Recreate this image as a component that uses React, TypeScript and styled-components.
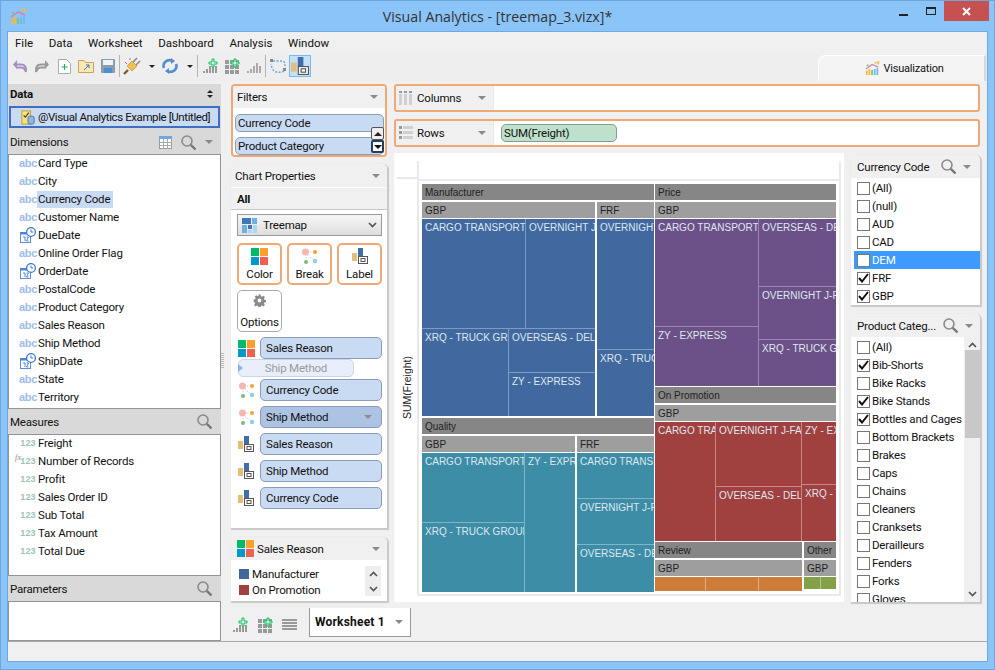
import * as React from 'react';
import styled, { createGlobalStyle } from 'styled-components';

const GlobalStyle = createGlobalStyle`
  html, body { margin: 0; padding: 0; overflow: hidden; }
  body { font-family: Roboto, "Noto Sans", sans-serif; font-size: 11.5px; letter-spacing: -0.2px; color: #111; }
  * { box-sizing: border-box; }
`;

const orange = '#f0a874';
const chartFont = '"Liberation Sans", Arial, sans-serif';

const Window = styled.div`
  width: 995px;
  height: 670px;
  background: #8bc4f8;
  border: 1px solid #6fa5d8;
  padding: 0 6px 7px;
  display: flex;
  flex-direction: column;
`;
const TitleBar = styled.div`
  height: 30px;
  display: grid;
  grid-template-columns: 1fr auto 1fr;
  align-items: center;
`;
const AppLogo = styled.div`
  padding: 1px 0 0 3px;
  display: flex;
`;
const Title = styled.div`
  font-family: "Open Sans", sans-serif;
  font-size: 14.2px;
  letter-spacing: 0;
  color: #333;
`;
const WindowButtons = styled.div`
  justify-self: end;
  align-self: start;
  display: flex;
  margin-right: -1px;
`;
const WindowButton = styled.div<{ $close?: boolean }>`
  width: ${p => (p.$close ? 45 : 27)}px;
  height: 20px;
  background: ${p => (p.$close ? '#c75050' : 'transparent')};
  display: flex;
  align-items: center;
  justify-content: center;
`;
const Content = styled.div`
  flex: 1;
  background: #f0f0f0;
  border: 1px solid #6fa8e0;
  display: flex;
  flex-direction: column;
`;
const MenuBar = styled.div`
  height: 22px;
  display: flex;
  align-items: center;
  gap: 15.6px;
  padding-left: 7px;
  flex: none;
`;
const MenuItem = styled.span`
  font-size: 11.5px;
  letter-spacing: 0;
`;
const Toolbar = styled.div`
  height: 27px;
  flex: none;
  display: flex;
  align-items: flex-start;
  background: #eeeeee;
  padding-left: 1px;
  margin-bottom: 3px;
`;
const ToolButton = styled.div<{ $w?: number; $active?: boolean }>`
  width: ${p => p.$w ?? 22}px;
  height: 22px;
  margin-top: 1px;
  display: flex;
  align-items: center;
  justify-content: center;
  background: ${p => (p.$active ? '#c5e0f8' : 'transparent')};
  border: ${p => (p.$active ? '1px solid #7ab8f0' : 'none')};
`;
const ToolSep = styled.div`
  width: 1px;
  height: 22px;
  margin: 1px 1px 1px 0;
  background: #b5b5b5;
`;
const VisTab = styled.div`
  margin-left: auto;
  margin-right: 1px;
  margin-top: 1px;
  width: 168px;
  height: 26px;
  background: #f4f4f4;
  border-top: 1px solid #fff;
  border-left: 1px solid #fff;
  border-right: 2px solid #d8d8d8;
  border-top-left-radius: 8px;
  display: flex;
  align-items: center;
  justify-content: center;
  gap: 3px;
  padding-left: 6px;
  font-size: 11px;
`;
const Main = styled.div`
  height: 557px;
  flex: none;
  display: flex;
`;
const LeftPanel = styled.div`
  width: 213px;
  flex: none;
  display: flex;
  flex-direction: column;
  background: #d9d9d9;
`;
const PanelHead = styled.div<{ $h: number; $bold?: boolean }>`
  height: ${p => p.$h}px;
  flex: none;
  display: flex;
  align-items: center;
  gap: 8px;
  padding: 0 8px 0 2px;
  font-weight: ${p => (p.$bold ? 700 : 400)};
`;
const HeadText = styled.span`
  flex: 1;
`;
const SourceRow = styled.div`
  height: 22px;
  margin: 2px 1px 2px;
  flex: none;
  background: #c9daf3;
  border: 2px solid #3f6fc0;
  display: flex;
  align-items: center;
  padding-left: 10px;
  gap: 3px;
  letter-spacing: -0.4px;
  white-space: nowrap;
  overflow: hidden;
`;
const FieldList = styled.div<{ $h: number }>`
  height: ${p => p.$h}px;
  flex: none;
  background: #fff;
  border: 1px solid #949494;
`;
const FieldRow = styled.div`
  height: 18px;
  display: flex;
  align-items: center;
  padding: 0 0 2px 10px;
  white-space: nowrap;
`;
const FieldType = styled.span<{ $kind: string }>`
  position: relative;
  width: 18px;
  flex: none;
  display: flex;
  justify-content: center;
  font-family: ${chartFont};
  font-size: ${p => (p.$kind === 'abc' ? 11 : 9)}px;
  font-weight: 700;
  color: ${p => (p.$kind === 'abc' ? '#9dbde9' : '#9cc5b4')};
  letter-spacing: ${p => (p.$kind === 'abc' ? '-0.3px' : '0.2px')};
`;
const FxMark = styled.i`
  position: absolute;
  left: -4px;
  top: -3px;
  font-size: 8px;
  font-family: "Liberation Serif", serif;
  font-weight: 400;
  color: #888;
`;
const FieldName = styled.span<{ $selected?: boolean }>`
  background: ${p => (p.$selected ? '#c9daf3' : 'transparent')};
  padding: 0 3px 0 1px;
  line-height: 17px;
`;
const Splitter = styled.div`
  width: 10px;
  flex: none;
  display: flex;
  align-items: flex-start;
  padding-top: 269px;
`;
const Grip = styled.div`
  width: 3px;
  height: 15px;
  background: repeating-linear-gradient(#bbb 0 1px, #f0f0f0 1px 2px);
`;
const Workspace = styled.div`
  flex: 1;
  display: flex;
  flex-direction: column;
  min-width: 0;
`;
const Panels = styled.div`
  height: 518px;
  flex: none;
  display: flex;
  gap: 7px;
`;
const CenterCol = styled.div`
  width: 156px;
  flex: none;
  display: flex;
  flex-direction: column;
`;
const FilterCard = styled.div`
  position: relative;
  height: 73px;
  flex: none;
  border: 2px solid ${orange};
  border-radius: 4px;
  background: #fff;
  overflow: hidden;
  margin-bottom: 7px;
`;
const CardHead = styled.div<{ $h?: number }>`
  height: ${p => p.$h ?? 22}px;
  flex: none;
  background: #f0f0f0;
  display: flex;
  align-items: center;
  justify-content: space-between;
  padding: 0 7px 0 4px;
`;
const Pill = styled.div<{ $tone?: 'normal' | 'dark' | 'green'; $h?: number; $w?: number; $pad?: number }>`
  height: ${p => p.$h ?? 22}px;
  width: ${p => (p.$w ? `${p.$w}px` : 'auto')};
  background: ${p => (p.$tone === 'dark' ? '#adc3e3' : p.$tone === 'green' ? '#bfe0cb' : '#c9daf3')};
  border: 1px solid ${p => (p.$tone === 'green' ? '#7fa090' : '#8a9cb8')};
  border-radius: 5px;
  display: flex;
  align-items: center;
  justify-content: space-between;
  padding: 0 9px 0 ${p => p.$pad ?? 2}px;
  white-space: nowrap;
`;
const FilterPills = styled.div`
  padding: 6px 1px 0 2px;
  display: flex;
  flex-direction: column;
  gap: 5px;
`;
const ScrollStep = styled.div<{ $bottom?: boolean }>`
  position: absolute;
  right: 1px;
  top: ${p => (p.$bottom ? 54 : 41)}px;
  width: 13px;
  height: 13px;
  background: ${p => (p.$bottom ? '#fff' : '#eee')};
  border: ${p => (p.$bottom ? '2px solid #1f3f66' : '1px solid #555')};
  border-radius: 2px;
  display: flex;
  align-items: center;
  justify-content: center;
`;
const Card = styled.div<{ $h: number; $top?: number }>`
  height: ${p => p.$h}px;
  flex: none;
  margin-top: ${p => p.$top ?? 0}px;
  background: #fff;
  border-radius: 5px 5px 0 0;
  box-shadow: 1px 1px 1px 1px #c8c8c8;
  display: flex;
  flex-direction: column;
  overflow: hidden;
`;
const AllRow = styled.div`
  height: 23px;
  flex: none;
  background: #f0f0f0;
  border-top: 1px solid #fff;
  border-bottom: 1px solid #c8c8c8;
  padding-left: 6px;
  display: flex;
  align-items: center;
  font-weight: 700;
`;
const ChartSelect = styled.div`
  height: 22px;
  flex: none;
  margin: 4px 5px 0 6px;
  border: 1px solid #999;
  background: linear-gradient(#f6f6f6, #dedede);
  display: flex;
  align-items: center;
  gap: 6px;
  padding: 0 4px;
`;
const SelectText = styled.span`
  flex: 1;
`;
const CardButtons = styled.div`
  display: grid;
  grid-template-columns: repeat(3, 45px);
  gap: 5px;
  padding: 7px 5px 0 6px;
`;
const MarkButton = styled.div<{ $plain?: boolean }>`
  height: 42px;
  background: #fff;
  border: ${p => (p.$plain ? '1px solid #aaa' : `2px solid ${orange}`)};
  border-radius: 5px;
  display: flex;
  flex-direction: column;
  align-items: center;
  justify-content: space-between;
  padding: 3px 0 2px;
`;
const Encodings = styled.div`
  padding: 5px 5px 0 7px;
  display: flex;
  flex-direction: column;
`;
const EncodingRow = styled.div`
  display: grid;
  grid-template-columns: 22px 1fr;
  align-items: center;
  margin-bottom: 5px;
`;
const GhostPill = styled.div`
  position: relative;
  height: 18px;
  width: 116px;
  margin: -5px 0 2px;
  background: #e8effa;
  border: 1px solid #c9d6ea;
  border-radius: 5px;
  color: #9a9a9a;
  text-align: center;
  line-height: 16px;
  white-space: nowrap;
`;
const GhostArrow = styled.i`
  position: absolute;
  left: -1px;
  top: 4px;
  border-left: 5px solid #8fb0f0;
  border-top: 4px solid transparent;
  border-bottom: 4px solid transparent;
`;
const LegendHead = styled(CardHead)`
  justify-content: flex-start;
  gap: 3px;
  padding: 0 7px 0 6px;
`;
const LegendBody = styled.div`
  display: flex;
  justify-content: space-between;
  padding: 6px 6px 0 8px;
`;
const LegendRow = styled.div`
  height: 16px;
  display: flex;
  align-items: center;
  gap: 3px;
  white-space: nowrap;
`;
const Swatch = styled.span<{ $c: string }>`
  width: 10px;
  height: 10px;
  background: ${p => p.$c};
`;
const LegendStep = styled.div`
  width: 16px;
  height: 30px;
  background: #eee;
  display: flex;
  flex-direction: column;
  align-items: center;
  justify-content: space-around;
`;
const RightCol = styled.div`
  width: 586px;
  flex: none;
  display: flex;
  flex-direction: column;
`;
const Shelf = styled.div`
  height: 28px;
  flex: none;
  margin-bottom: 7px;
  background: #fff;
  border: 2px solid ${orange};
  border-radius: 3px;
  display: flex;
`;
const ShelfLabel = styled.div`
  width: 98px;
  flex: none;
  background: #f0f0f0;
  border-right: 1px solid #eeeadb;
  display: flex;
  align-items: center;
  padding: 0 7px 0 3px;
  gap: 4px;
`;
const ShelfBody = styled.div`
  flex: 1;
  display: flex;
  align-items: center;
  padding-left: 7px;
`;
const Stage = styled.div`
  flex: 1;
  display: flex;
  gap: 7px;
  margin-top: -1px;
`;
const Chart = styled.div`
  width: 450px;
  height: 449px;
  flex: none;
  background: #fff;
  padding: 8px 3px 6px;
  display: grid;
  grid-template-columns: 20px minmax(0, 1fr);
  grid-template-rows: 18px minmax(0, 1fr);
`;
const Corner = styled.div`
  border-bottom: 2px solid #e9e9e9;
`;
const TopAxis = styled.div`
  border-left: 2px solid #e9e9e9;
  border-right: 2px solid #e9e9e9;
`;
const YAxis = styled.div`
  display: flex;
  align-items: center;
  justify-content: center;
  font-family: ${chartFont};
  font-size: 10.5px;
  letter-spacing: 0;
  color: #222;
`;
const YLabel = styled.span`
  writing-mode: vertical-rl;
  transform: rotate(180deg);
`;
const Plot = styled.div`
  border: 2px solid #e9e9e9;
  padding: 3px 3px 2px;
  display: flex;
  gap: 1px;
  min-width: 0;
`;
const Column = styled.div<{ $w?: number; $gap?: number }>`
  width: ${p => (p.$w ? `${p.$w}px` : 'auto')};
  flex: ${p => (p.$w ? 'none' : '1 1 0')};
  min-width: 0;
  display: flex;
  flex-direction: column;
  gap: ${p => p.$gap ?? 2}px;
`;
const Row = styled.div<{ $h?: number; $gap?: number }>`
  height: ${p => (p.$h ? `${p.$h}px` : 'auto')};
  display: flex;
  gap: ${p => p.$gap ?? 1}px;
  min-width: 0;
`;
const Section = styled.div<{ $h?: number; $w?: number }>`
  height: ${p => (p.$h ? `${p.$h}px` : 'auto')};
  width: ${p => (p.$w ? `${p.$w}px` : 'auto')};
  flex: ${p => (p.$w ? 'none' : 'initial')};
  min-width: 0;
  display: flex;
  flex-direction: column;
  overflow: hidden;
`;
const GroupHead = styled.div<{ $level: 1 | 2 }>`
  height: 16px;
  flex: none;
  margin-bottom: ${p => (p.$level === 1 ? 2 : 1)}px;
  background: ${p => (p.$level === 1 ? '#868686' : '#9e9e9e')};
  color: #222;
  font-family: ${chartFont};
  font-size: 10px;
  letter-spacing: 0;
  line-height: 17px;
  padding-left: 3px;
  white-space: nowrap;
  overflow: hidden;
`;
const Sections = styled.div`
  flex: 1;
  display: flex;
  gap: 2px;
  min-height: 0;
  min-width: 0;
`;
const Group = styled.div<{ $w?: number }>`
  width: ${p => (p.$w ? `${p.$w}px` : 'auto')};
  flex: ${p => (p.$w ? 'none' : '1 1 0')};
  display: flex;
  flex-direction: column;
  min-width: 0;
`;
const TileSplit = styled.div<{ $dir: 'row' | 'column'; $size?: number; $line: string }>`
  display: flex;
  flex-direction: ${p => p.$dir};
  gap: 1px;
  background: ${p => p.$line};
  flex: ${p => (p.$size ? `0 0 ${p.$size}px` : '1 1 0')};
  min-width: 0;
  min-height: 0;
`;
const Tile = styled.div<{ $size?: number; $fill: string }>`
  flex: ${p => (p.$size ? `0 0 ${p.$size}px` : '1 1 0')};
  min-width: 0;
  min-height: 0;
  background: ${p => p.$fill};
  color: #dfe7ef;
  font-family: ${chartFont};
  font-size: 10px;
  letter-spacing: 0;
  padding: 3px 0 0 3px;
  white-space: nowrap;
  overflow: hidden;
`;
const FilterCol = styled.div`
  width: 129px;
  flex: none;
  display: flex;
  flex-direction: column;
  padding-top: 2px;
`;
const FilterBox = styled.div<{ $h: number }>`
  height: ${p => p.$h}px;
  flex: none;
  background: #fff;
  border-radius: 5px 5px 0 0;
  box-shadow: 1px 1px 1px 1px #c8c8c8;
  margin-bottom: 9px;
  display: flex;
  flex-direction: column;
  overflow: hidden;
`;
const FilterHead = styled.div`
  height: 23px;
  flex: none;
  background: #f0f0f0;
  display: flex;
  align-items: center;
  gap: 6px;
  padding: 0 9px 0 6px;
  white-space: nowrap;
`;
const FilterBody = styled.div`
  flex: 1;
  display: flex;
  min-height: 0;
`;
const FilterList = styled.div`
  flex: 1;
  padding: 1px 0 0 3px;
  min-width: 0;
  overflow: hidden;
`;
const FilterItem = styled.div<{ $selected?: boolean }>`
  height: 18px;
  display: flex;
  align-items: center;
  gap: 2px;
  padding-left: 3px;
  white-space: nowrap;
  background: ${p => (p.$selected ? '#3d9bff' : 'transparent')};
  color: ${p => (p.$selected ? '#fff' : '#111')};
`;
const CheckBox = styled.span`
  width: 13px;
  height: 13px;
  flex: none;
  background: #fff;
  border: 1px solid #777;
  display: flex;
  align-items: center;
  justify-content: center;
`;
const ScrollBar = styled.div`
  width: 16px;
  flex: none;
  background: #f0f0f0;
  display: flex;
  flex-direction: column;
  align-items: center;
  padding-top: 5px;
`;
const Thumb = styled.div`
  width: 15px;
  height: 88px;
  margin-top: 2px;
  background: #c8c8c8;
`;
const ScrollEnd = styled.div`
  margin-top: auto;
  padding-bottom: 5px;
  display: flex;
`;
const TabBar = styled.div`
  flex: 1;
  display: flex;
  align-items: flex-start;
  padding-top: 6px;
`;
const TabIcons = styled.div`
  display: flex;
  gap: 9px;
  padding: 9px 12px 0 1px;
`;
const SheetTab = styled.div`
  width: 102px;
  height: 29px;
  background: #fff;
  border: 1px solid #999;
  border-top: none;
  display: flex;
  align-items: center;
  justify-content: space-between;
  padding: 0 7px 0 5px;
  font-weight: 700;
  font-size: 12px;
  letter-spacing: 0.2px;
`;
const StatusBar = styled.div`
  flex: 1;
  border-top: 1px solid #aaa;
`;
const Caret = styled.i<{ $c?: string }>`
  flex: none;
  display: block;
  width: 0;
  height: 0;
  border-left: 4px solid transparent;
  border-right: 4px solid transparent;
  border-top: 4px solid ${p => p.$c ?? '#8a8a8a'};
`;
const SmallCaret = styled(Caret)`
  border-left-width: 3px;
  border-right-width: 3px;
  border-top-width: 3px;
  margin-left: 2px;
`;
const CaretUp = styled.i`
  display: block;
  width: 0;
  height: 0;
  border-left: 4px solid transparent;
  border-right: 4px solid transparent;
  border-bottom: 4px solid #222;
`;
const SortArrows = styled.span`
  display: flex;
  flex-direction: column;
  gap: 2px;
`;
const TinyUp = styled.i`
  display: block;
  border-left: 3px solid transparent;
  border-right: 3px solid transparent;
  border-bottom: 3px solid #222;
`;
const TinyDown = styled.i`
  display: block;
  border-left: 3px solid transparent;
  border-right: 3px solid transparent;
  border-top: 3px solid #222;
`;

const Logo = ({ s = 17 }: { s?: number }) => (
  <svg width={s} height={s} viewBox="0 0 17 17">
    <rect x="1" y="11" width="2" height="5" fill="#f5b942" />
    <rect x="4" y="9" width="2" height="7" fill="#f5b942" />
    <rect x="7" y="10" width="2" height="6" fill="#8cc06a" />
    <rect x="10" y="9" width="2" height="7" fill="#6cbcf0" />
    <rect x="13" y="8" width="2" height="8" fill="#6cbcf0" />
    <path d="M1 9 L8 4 L15 7" stroke="#d080b8" strokeWidth="1.4" fill="none" />
    <rect x="2" y="4" width="2" height="2" fill="#8cc06a" />
    <rect x="11" y="1" width="2" height="2" fill="#f5b942" />
    <rect x="14" y="0" width="2" height="4" fill="#f5b942" />
  </svg>
);
const Magnifier = ({ s = 17 }: { s?: number }) => (
  <svg width={s} height={s} viewBox="0 0 17 17" style={{ flex: 'none' }}>
    <circle cx="7" cy="7" r="5" fill="none" stroke="#8a8a8a" strokeWidth="1.6" />
    <path d="M10.8 10.8 L15.5 15.5" stroke="#777" strokeWidth="2.4" />
  </svg>
);
const ColorIcon = () => (
  <svg width="17" height="17" viewBox="0 0 17 17" style={{ flex: 'none' }}>
    <rect x="0" y="0" width="8" height="8" fill="#00b96b" />
    <rect x="9" y="0" width="8" height="8" fill="#f8a030" />
    <rect x="0" y="9" width="8" height="8" fill="#0099cc" />
    <rect x="9" y="9" width="8" height="8" fill="#f06050" />
  </svg>
);
const BreakIcon = () => (
  <svg width="17" height="17" viewBox="0 0 17 17" style={{ flex: 'none' }}>
    <path d="M6 6 L9 9 M9 4 L11 4 M5 9 L5 11 M9 9 L12 11" stroke="#bbb" strokeWidth="0.8" strokeDasharray="1 1" />
    <circle cx="4.5" cy="4" r="3.5" fill="#f5b8b0" />
    <circle cx="14" cy="4" r="2" fill="#f8a030" />
    <circle cx="5" cy="14" r="2" fill="#7cb87c" />
    <circle cx="14" cy="13" r="2.2" fill="#8ccdf5" />
  </svg>
);
const LabelIcon = ({ s = 16 }: { s?: number }) => (
  <svg width={s} height={s} viewBox="0 0 16 16" style={{ flex: 'none' }}>
    <rect x="0" y="5" width="5" height="8" fill="#e5bd7a" />
    <rect x="6" y="0" width="5" height="9" fill="#3f6fa8" />
    <rect x="6.5" y="8.5" width="9" height="7" fill="#fff" stroke="#555" />
    <rect x="9" y="10.5" width="4" height="3" fill="none" stroke="#555" />
  </svg>
);
const DateIcon = () => (
  <svg width="16" height="16" viewBox="0 0 16 16" style={{ flex: 'none' }}>
    <rect x="0.5" y="5.5" width="10" height="10" fill="#fff" stroke="#5b8fd8" />
    <rect x="0" y="5" width="11" height="2.5" fill="#4f86d8" />
    <path d="M3 10 h2 v4 M6.5 10 h2 l-2 4 h2" stroke="#4f86d8" fill="none" />
    <circle cx="11" cy="5" r="4.4" fill="#fff" stroke="#3d7ad0" strokeWidth="1.3" />
    <path d="M11 2.5 V5 H13.2" stroke="#3d7ad0" fill="none" />
  </svg>
);
const TableIcon = () => (
  <svg width="13" height="13" viewBox="0 0 13 13" style={{ flex: 'none' }}>
    <rect x="0.5" y="0.5" width="12" height="12" fill="#fff" stroke="#999" />
    <rect x="0" y="0" width="13" height="3" fill="#6fa8dc" />
    <path d="M4.5 3 V13 M8.5 3 V13 M0 6.5 H13 M0 9.5 H13" stroke="#aaa" />
  </svg>
);
const Chevron = ({ up, c = '#555' }: { up?: boolean; c?: string }) => (
  <svg width="9" height="6" viewBox="0 0 9 6">
    <path d={up ? 'M1 5 L4.5 1.5 L8 5' : 'M1 1 L4.5 4.5 L8 1'} stroke={c} strokeWidth="1.7" fill="none" />
  </svg>
);
const GearIcon = () => (
  <svg width="13" height="13" viewBox="0 0 24 24">
    <path
      fill="#8a8a8a"
      d="M10 1h4l.6 3.1 2 .8 2.6-1.800 2.800 2.800-1.800 2.600.8 2 3 .5v4l-3 .6-.8 2 1.800 2.600-2.800 2.800-2.600-1.800-2 .8-.6 3h-4l-.6-3-2-.8-2.600 1.800-2.800-2.800 1.800-2.600-.8-2L1 14v-4l3.100-.5.8-2-1.800-2.600 2.800-2.800 2.600 1.800 2-.8zM12 8.500a3.500 3.500 0 1 0 0 7 3.500 3.500 0 0 0 0-7z"
    />
  </svg>
);
const TreemapIcon = () => (
  <svg width="15" height="15" viewBox="0 0 15 15" style={{ flex: 'none' }}>
    <rect x="0" y="0" width="9" height="6" fill="#3f78b8" />
    <rect x="10" y="0" width="5" height="6" fill="#6fb0e0" />
    <rect x="0" y="7" width="5" height="8" fill="#6fb0e0" />
    <rect x="6" y="7" width="4" height="4" fill="#3f78b8" />
    <rect x="6" y="12" width="4" height="3" fill="#a8d8f5" />
    <rect x="11" y="7" width="4" height="8" fill="#a8d8f5" />
  </svg>
);
const Plus = ({ x, y }: { x: number; y: number }) => (
  <path d={`M${x - 1} ${y - 4} h2 v3 h3 v2 h-3 v3 h-2 v-3 h-3 v-2 h3 z`} fill="#d8f5e0" stroke="#12c060" strokeWidth="1" />
);
const BarsAdd = ({ plus = true, tone = '#999' }: { plus?: boolean; tone?: string }) => (
  <svg width="16" height="16" viewBox="0 0 16 16">
    <rect x="1" y="13" width="2" height="2" fill={tone} />
    <rect x="4" y="11" width="2" height="4" fill={tone} />
    <rect x="7" y="8" width="2" height="7" fill={tone} />
    <rect x="10" y="5" width="2" height="10" fill={tone} />
    <rect x="13" y="8" width="2" height="7" fill={tone} />
    {plus && <Plus x={11} y={5} />}
  </svg>
);
const GridAdd = () => (
  <svg width="16" height="16" viewBox="0 0 16 16">
    {[1, 6, 11].map(x => [2, 7, 12].map(y => <rect key={`${x}${y}`} x={x} y={y} width="4" height="4" fill="#999" />))}
    <Plus x={11} y={5} />
  </svg>
);
const Undo = ({ c, flip }: { c: string; flip?: boolean }) => (
  <svg width="16" height="15" viewBox="0 0 16 15" style={flip ? { transform: 'scaleX(-1)' } : undefined}>
    <path d="M5 1 L1 5.500 L5 10 Z" fill={c} />
    <path d="M3 5.500 H9 C13 5.500 14.500 8 14 13 C13 10 11.500 8.500 9 8.500 H4" stroke={c} strokeWidth="2" fill="none" />
  </svg>
);
const NewDoc = () => (
  <svg width="13" height="15" viewBox="0 0 13 15">
    <path d="M.5.5 H8.500 L12.500 4.500 V14.500 H.5 Z" fill="#fff" stroke="#aaa" />
    <path d="M6.500 5 V11 M3.500 8 H9.500" stroke="#2faa5f" strokeWidth="1.2" />
  </svg>
);
const Folder = () => (
  <svg width="16" height="14" viewBox="0 0 16 14">
    <path d="M.5 1.500 H6 L7.500 3.500 H15.500 V13.500 H.5 Z" fill="#f8e7b5" stroke="#c9a45a" />
    <path d="M6 11 L11 6 M8 6 H11 V9" stroke="#3f78b8" fill="none" />
  </svg>
);
const Save = () => (
  <svg width="14" height="14" viewBox="0 0 14 14">
    <rect x="0" y="0" width="14" height="14" rx="1" fill="#8a9cad" />
    <rect x="2" y="1" width="10" height="5" fill="#eef4fa" />
    <rect x="3" y="9" width="8" height="5" fill="#4a90d0" />
  </svg>
);
const Plug = () => (
  <svg width="18" height="18" viewBox="0 0 18 18">
    <path d="M4 9 L9 4 L14 9 L9 14 Z" fill="#f0c050" stroke="#b08a30" strokeWidth="0.6" />
    <path d="M10 5 L14 1 M13 8 L17 4" stroke="#8a8a8a" strokeWidth="1.6" />
    <path d="M5 13 L1 17" stroke="#7a5a30" strokeWidth="2.4" />
    <path d="M2 5 L4 7 M7 1 L7 3" stroke="#d05a9a" strokeWidth="1" />
  </svg>
);
const Refresh = () => (
  <svg width="16" height="16" viewBox="0 0 16 16">
    <path d="M2 10 C0 5 5 1 10 2.500" stroke="#4f8fd0" strokeWidth="2.600" fill="none" />
    <path d="M14 6 C16 11 11 15 6 13.500" stroke="#4f8fd0" strokeWidth="2.600" fill="none" />
    <path d="M9 0 L13 3 L9 6 Z M7 10 L3 13 L7 16 Z" fill="#4f8fd0" />
  </svg>
);
const Rotate = () => (
  <svg width="16" height="16" viewBox="0 0 16 16">
    <path d="M3 3 H12 C15 3 15 6 15 10 M14 13 C10 15 4 15 2 10 L1 6" stroke="#6aa8d8" strokeDasharray="2 1.500" strokeWidth="1.400" fill="none" />
    <rect x="0" y="1" width="3" height="3" fill="#888" />
    <rect x="13" y="10" width="3" height="3" fill="#888" />
  </svg>
);
const SourceIcon = () => (
  <svg width="14" height="15" viewBox="0 0 16 17" style={{ flex: 'none' }}>
    <rect x="1" y="1" width="10" height="15" fill="#f8e27a" stroke="#b89a30" />
    <path d="M3 6 L5 8 L9 3" stroke="#3a3a3a" strokeWidth="1.300" fill="none" />
    <rect x="8" y="7" width="7" height="9" rx="2" fill="#8fb8e0" stroke="#4a6fa0" />
  </svg>
);
const ShelfDots = ({ rows }: { rows?: boolean }) => (
  <svg width="14" height="14" viewBox="0 0 14 14" style={{ flex: 'none' }}>
    {rows
      ? [0, 5, 10].map(y => (
          <g key={y}>
            <rect x="0" y={y} width="3" height="3" fill="#999" />
            <rect x="4" y={y} width="10" height="3" fill="#d0d0d0" />
          </g>
        ))
      : [0, 5, 10].map(x => (
          <g key={x}>
            <rect x={x} y="0" width="3" height="2" fill="#999" />
            <rect x={x} y="3" width="3" height="11" fill="#d0d0d0" />
          </g>
        ))}
  </svg>
);
const ListLines = () => (
  <svg width="15" height="11" viewBox="0 0 15 11" style={{ marginTop: 2 }}>
    {[0, 3, 6, 9].map(y => <rect key={y} x="0" y={y} width="15" height="2" fill="#999" />)}
  </svg>
);
const Check = () => (
  <svg width="11" height="10" viewBox="0 0 11 10">
    <path d="M1 5 L4 8.500 L10 1" stroke="#111" strokeWidth="2" fill="none" />
  </svg>
);

type Kind = 'abc' | 'date' | 'num' | 'fx';
const dimensions: [string, Kind][] = [
  ['Card Type', 'abc'], ['City', 'abc'], ['Currency Code', 'abc'], ['Customer Name', 'abc'],
  ['DueDate', 'date'], ['Online Order Flag', 'abc'], ['OrderDate', 'date'], ['PostalCode', 'abc'],
  ['Product Category', 'abc'], ['Sales Reason', 'abc'], ['Ship Method', 'abc'], ['ShipDate', 'date'],
  ['State', 'abc'], ['Territory', 'abc'],
];
const measures: [string, Kind][] = [
  ['Freight', 'num'], ['Number of Records', 'fx'], ['Profit', 'num'], ['Sales Order ID', 'num'],
  ['Sub Total', 'num'], ['Tax Amount', 'num'], ['Total Due', 'num'],
];

const Field = ({ name, kind }: { name: string; kind: Kind }) => (
  <FieldRow>
    {kind === 'date' ? (
      <FieldType $kind="abc"><DateIcon /></FieldType>
    ) : (
      <FieldType $kind={kind === 'abc' ? 'abc' : 'num'}>
        {kind === 'fx' && <FxMark>fx</FxMark>}
        {kind === 'abc' ? 'abc' : '123'}
      </FieldType>
    )}
    <FieldName $selected={name === 'Currency Code'}>{name}</FieldName>
  </FieldRow>
);

// treemap data: sizes are px, a missing size takes what is left
type Node = { label?: string; size?: number; dir?: 'row' | 'column'; kids?: Node[] };
type Tone = { fill: string; line: string };
const blue = { fill: '#41699f', line: '#7d9cc4' };
const purple = { fill: '#6b5188', line: '#9a86b0' };
const teal = { fill: '#3d8da7', line: '#7fb5c8' };
const red = { fill: '#a0403f', line: '#c48a8a' };
const amber = { fill: '#cd7c38', line: '#e2ae84' };
const moss = { fill: '#84a048', line: '#b5c98c' };

const Tiles = ({ node, tone }: { node: Node; tone: Tone }) =>
  node.kids ? (
    <TileSplit $dir={node.dir ?? 'row'} $size={node.size} $line={tone.line}>
      {node.kids.map((k, i) => <Tiles key={i} node={k} tone={tone} />)}
    </TileSplit>
  ) : (
    <Tile $size={node.size} $fill={tone.fill}>{node.label}</Tile>
  );

const Currency = ({ name, w, tone, node }: { name: string; w?: number; tone: Tone; node: Node }) => (
  <Group $w={w}>
    <GroupHead $level={2}>{name}</GroupHead>
    <Tiles node={node} tone={tone} />
  </Group>
);

const Treemap = () => (
  <>
    <Column $w={232} $gap={2}>
      <Section $h={232}>
        <GroupHead $level={1}>Manufacturer</GroupHead>
        <Sections>
          <Currency name="GBP" w={173} tone={blue} node={{
            dir: 'column', kids: [
              { dir: 'row', size: 109, kids: [{ label: 'CARGO TRANSPORT 5', size: 103 }, { label: 'OVERNIGHT J-FAST' }] },
              { dir: 'row', kids: [
                { label: 'XRQ - TRUCK GROUND', size: 86 },
                { dir: 'column', kids: [{ label: 'OVERSEAS - DELUXE', size: 43 }, { label: 'ZY - EXPRESS' }] },
              ] },
            ],
          }} />
          <Currency name="FRF" tone={blue} node={{
            dir: 'column', kids: [{ label: 'OVERNIGHT J-FAST', size: 130 }, { label: 'XRQ - TRUCK GROUND' }],
          }} />
        </Sections>
      </Section>
      <Section $h={174}>
        <GroupHead $level={1}>Quality</GroupHead>
        <Sections>
          <Currency name="GBP" w={153} tone={teal} node={{
            dir: 'row', kids: [
              { dir: 'column', size: 102, kids: [{ label: 'CARGO TRANSPORT 5', size: 69 }, { label: 'XRQ - TRUCK GROUND' }] },
              { label: 'ZY - EXPRESS' },
            ],
          }} />
          <Currency name="FRF" tone={teal} node={{
            dir: 'column', kids: [{ label: 'CARGO TRANSPORT 5', size: 45 }, { label: 'OVERNIGHT J-FAST', size: 45 }, { label: 'OVERSEAS - DELUXE' }],
          }} />
        </Sections>
      </Section>
    </Column>
    <Column $gap={1}>
      <Section $h={202}>
        <GroupHead $level={1}>Price</GroupHead>
        <Sections>
          <Currency name="GBP" tone={purple} node={{
            dir: 'row', kids: [
              { dir: 'column', size: 103, kids: [{ label: 'CARGO TRANSPORT 5', size: 107 }, { label: 'ZY - EXPRESS' }] },
              { dir: 'column', kids: [{ label: 'OVERSEAS - DELUXE', size: 67 }, { label: 'OVERNIGHT J-FAST', size: 52 }, { label: 'XRQ - TRUCK GROUND' }] },
            ],
          }} />
        </Sections>
      </Section>
      <Section $h={155}>
        <GroupHead $level={1}>On Promotion</GroupHead>
        <Sections>
          <Currency name="GBP" tone={red} node={{
            dir: 'row', kids: [
              { label: 'CARGO TRANSPORT 5', size: 60 },
              { dir: 'column', size: 85, kids: [{ label: 'OVERNIGHT J-FAST', size: 64 }, { label: 'OVERSEAS - DELUXE' }] },
              { dir: 'column', kids: [{ label: 'ZY - EXPRESS', size: 62 }, { label: 'XRQ - TRUCK GROUND' }] },
            ],
          }} />
        </Sections>
      </Section>
      <Row $h={50} $gap={2}>
        <Section $w={147}>
          <GroupHead $level={1}>Review</GroupHead>
          <Sections>
            <Currency name="GBP" tone={amber} node={{ dir: 'row', size: 14, kids: [{ size: 50 }, { size: 52 }, {}] }} />
          </Sections>
        </Section>
        <Group>
          <GroupHead $level={1}>Other</GroupHead>
          <Sections>
            <Currency name="GBP" tone={moss} node={{ dir: 'row', size: 12, kids: [{ size: 16 }, {}] }} />
          </Sections>
        </Group>
      </Row>
    </Column>
  </>
);

const currencyCodes = ['(All)', '(null)', 'AUD', 'CAD', 'DEM', 'FRF', 'GBP'];
const categories = [
  '(All)', 'Bib-Shorts', 'Bike Racks', 'Bike Stands', 'Bottles and Cages', 'Bottom Brackets', 'Brakes',
  'Caps', 'Chains', 'Cleaners', 'Cranksets', 'Derailleurs', 'Fenders', 'Forks', 'Gloves',
];
const checked = ['FRF', 'GBP', 'Bib-Shorts', 'Bike Stands', 'Bottles and Cages'];

const FilterOption = ({ name }: { name: string }) => (
  <FilterItem $selected={name === 'DEM'}>
    <CheckBox>{checked.includes(name) && <Check />}</CheckBox>
    {name}
  </FilterItem>
);

const encodings: [React.ReactNode, string, boolean?][] = [
  [<BreakIcon />, 'Currency Code'],
  [<BreakIcon />, 'Ship Method', true],
  [<LabelIcon />, 'Sales Reason'],
  [<LabelIcon />, 'Ship Method'],
  [<LabelIcon />, 'Currency Code'],
];

export default function App() {
  return (
    <Window>
      <GlobalStyle />
      <TitleBar>
        <AppLogo><Logo /></AppLogo>
        <Title>Visual Analytics - [treemap_3.vizx]*</Title>
        <WindowButtons>
          <WindowButton>
            <svg width="9" height="10" viewBox="0 0 9 10"><rect y="8" width="9" height="2" fill="#222" /></svg>
          </WindowButton>
          <WindowButton>
            <svg width="10" height="8" viewBox="0 0 10 8"><rect x=".5" y=".5" width="9" height="7" fill="none" stroke="#222" /><rect width="10" height="2" fill="#222" /></svg>
          </WindowButton>
          <WindowButton $close>
            <svg width="9" height="9" viewBox="0 0 9 9"><path d="M1 1 L8 8 M8 1 L1 8" stroke="#fff" strokeWidth="2" /></svg>
          </WindowButton>
        </WindowButtons>
      </TitleBar>
      <Content>
        <MenuBar>
          {['File', 'Data', 'Worksheet', 'Dashboard', 'Analysis', 'Window'].map(m => <MenuItem key={m}>{m}</MenuItem>)}
        </MenuBar>
        <Toolbar>
          <ToolButton><Undo c="#a58fc0" /></ToolButton>
          <ToolButton><Undo c="#999" flip /></ToolButton>
          <ToolButton><NewDoc /></ToolButton>
          <ToolButton><Folder /></ToolButton>
          <ToolButton><Save /></ToolButton>
          <ToolSep />
          <ToolButton><Plug /></ToolButton>
          <ToolButton $w={16}><SmallCaret $c="#222" /></ToolButton>
          <ToolButton><Refresh /></ToolButton>
          <ToolButton $w={16}><SmallCaret $c="#222" /></ToolButton>
          <ToolSep />
          <ToolButton><BarsAdd /></ToolButton>
          <ToolButton><GridAdd /></ToolButton>
          <ToolButton><BarsAdd plus={false} tone="#aaa" /></ToolButton>
          <ToolSep />
          <ToolButton><Rotate /></ToolButton>
          <ToolButton $active><LabelIcon s={18} /></ToolButton>
          <VisTab><Logo s={15} />Visualization</VisTab>
        </Toolbar>
        <Main>
          <LeftPanel>
            <PanelHead $h={20} $bold>
              <HeadText>Data</HeadText>
              <SortArrows><TinyUp /><TinyDown /></SortArrows>
            </PanelHead>
            <SourceRow><SourceIcon />@Visual Analytics Example [Untitled]</SourceRow>
            <PanelHead $h={24}>
              <HeadText>Dimensions</HeadText>
              <TableIcon />
              <Magnifier />
              <Caret />
            </PanelHead>
            <FieldList $h={255}>
              {dimensions.map(([n, k]) => <Field key={n} name={n} kind={k} />)}
            </FieldList>
            <PanelHead $h={25}>
              <HeadText>Measures</HeadText>
              <Magnifier />
            </PanelHead>
            <FieldList $h={142}>
              {measures.map(([n, k]) => <Field key={n} name={n} kind={k} />)}
            </FieldList>
            <PanelHead $h={25}>
              <HeadText>Parameters</HeadText>
              <Magnifier />
            </PanelHead>
            <FieldList $h={40} />
          </LeftPanel>
          <Splitter><Grip /></Splitter>
          <Workspace>
            <Panels>
              <CenterCol>
                <FilterCard>
                  <CardHead>Filters<Caret /></CardHead>
                  <FilterPills>
                    <Pill $h={18}>Currency Code</Pill>
                    <Pill $h={18}>Product Category</Pill>
                  </FilterPills>
                  <ScrollStep><CaretUp /></ScrollStep>
                  <ScrollStep $bottom><Caret $c="#111" /></ScrollStep>
                </FilterCard>
                <Card $h={364}>
                  <CardHead $h={23}>Chart Properties<Caret /></CardHead>
                  <AllRow>All</AllRow>
                  <ChartSelect>
                    <TreemapIcon />
                    <SelectText>Treemap</SelectText>
                    <Chevron />
                  </ChartSelect>
                  <CardButtons>
                    <MarkButton><ColorIcon />Color</MarkButton>
                    <MarkButton><BreakIcon />Break</MarkButton>
                    <MarkButton><LabelIcon />Label</MarkButton>
                    <MarkButton $plain><GearIcon />Options</MarkButton>
                  </CardButtons>
                  <Encodings>
                    <EncodingRow><ColorIcon /><Pill $pad={5}>Sales Reason</Pill></EncodingRow>
                    <GhostPill><GhostArrow />Ship Method</GhostPill>
                    {encodings.map(([icon, name, open], i) => (
                      <EncodingRow key={i}>
                        {icon}
                        <Pill $pad={5} $tone={open ? 'dark' : 'normal'}>{name}{open && <Caret />}</Pill>
                      </EncodingRow>
                    ))}
                  </Encodings>
                </Card>
                <Card $h={64} $top={9}>
                  <LegendHead $h={23}>
                    <ColorIcon />
                    <HeadText>Sales Reason</HeadText>
                    <Caret />
                  </LegendHead>
                  <LegendBody>
                    <div>
                      <LegendRow><Swatch $c="#41699f" />Manufacturer</LegendRow>
                      <LegendRow><Swatch $c="#a0403f" />On Promotion</LegendRow>
                    </div>
                    <LegendStep><Chevron up /><Chevron /></LegendStep>
                  </LegendBody>
                </Card>
              </CenterCol>
              <RightCol>
                <Shelf>
                  <ShelfLabel><ShelfDots /><HeadText>Columns</HeadText><Caret /></ShelfLabel>
                  <ShelfBody />
                </Shelf>
                <Shelf>
                  <ShelfLabel><ShelfDots rows /><HeadText>Rows</HeadText><Caret /></ShelfLabel>
                  <ShelfBody><Pill $tone="green" $h={18} $w={116}>SUM(Freight)</Pill></ShelfBody>
                </Shelf>
                <Stage>
                  <Chart>
                    <Corner />
                    <TopAxis />
                    <YAxis><YLabel>SUM(Freight)</YLabel></YAxis>
                    <Plot><Treemap /></Plot>
                  </Chart>
                  <FilterCol>
                    <FilterBox $h={150}>
                      <FilterHead><HeadText>Currency Code</HeadText><Magnifier /><Caret /></FilterHead>
                      <FilterBody>
                        <FilterList>{currencyCodes.map(c => <FilterOption key={c} name={c} />)}</FilterList>
                      </FilterBody>
                    </FilterBox>
                    <FilterBox $h={288}>
                      <FilterHead><HeadText>Product Categ...</HeadText><Magnifier /><Caret /></FilterHead>
                      <FilterBody>
                        <FilterList>{categories.map(c => <FilterOption key={c} name={c} />)}</FilterList>
                        <ScrollBar>
                          <Chevron up />
                          <Thumb />
                          <ScrollEnd><Chevron /></ScrollEnd>
                        </ScrollBar>
                      </FilterBody>
                    </FilterBox>
                  </FilterCol>
                </Stage>
              </RightCol>
            </Panels>
            <TabBar>
              <TabIcons><BarsAdd /><GridAdd /><ListLines /></TabIcons>
              <SheetTab>Worksheet 1<Caret /></SheetTab>
            </TabBar>
          </Workspace>
        </Main>
        <StatusBar />
      </Content>
    </Window>
  );
}
